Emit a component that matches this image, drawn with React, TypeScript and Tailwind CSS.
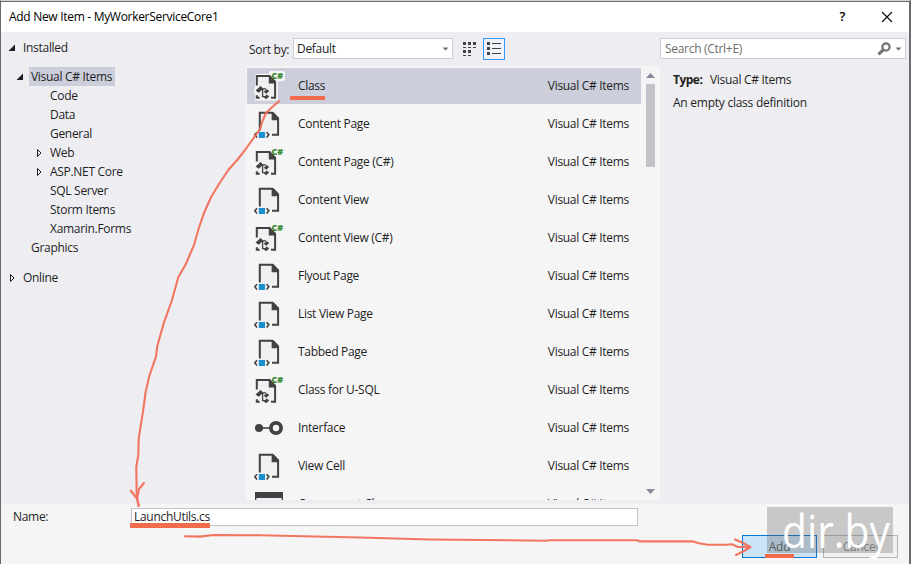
import clsx from 'clsx'

type IconKind = 'csharp' | 'xaml' | 'interface' | 'component'

const treeItems = [
  { label: 'Code' },
  { label: 'Data' },
  { label: 'General' },
  { label: 'Web', expandable: true },
  { label: 'ASP.NET Core', expandable: true },
  { label: 'SQL Server' },
  { label: 'Storm Items' },
  { label: 'Xamarin.Forms' },
]

const templates: { name: string; icon: IconKind }[] = [
  { name: 'Class', icon: 'csharp' },
  { name: 'Content Page', icon: 'xaml' },
  { name: 'Content Page (C#)', icon: 'csharp' },
  { name: 'Content View', icon: 'xaml' },
  { name: 'Content View (C#)', icon: 'csharp' },
  { name: 'Flyout Page', icon: 'xaml' },
  { name: 'List View Page', icon: 'xaml' },
  { name: 'Tabbed Page', icon: 'xaml' },
  { name: 'Class for U-SQL', icon: 'csharp' },
  { name: 'Interface', icon: 'interface' },
  { name: 'View Cell', icon: 'xaml' },
  { name: 'Component Class', icon: 'component' },
]

function OpenArrow() {
  return (
    <svg width="8" height="8" viewBox="0 0 8 8" className="shrink-0">
      <path d="M7 0.5V7H0.5Z" fill="#1e1e1e" />
    </svg>
  )
}

function ClosedArrow() {
  return (
    <svg width="6" height="10" viewBox="0 0 6 10" className="shrink-0">
      <path d="M1.5 1.5L5 5L1.5 8.5Z" fill="none" stroke="#1e1e1e" />
    </svg>
  )
}

function TemplateIcon({ kind, selected }: { kind: IconKind; selected?: boolean }) {
  if (kind === 'xaml') {
    return (
      <svg width="32" height="32" viewBox="0 0 32 32" className="shrink-0">
        <path d="M7 5H19L25 11V27H7Z" fill="#f0eff1" />
        <path d="M6.8 22.5V4.8H19.5L25.1 10.5V26.8H19" fill="none" stroke="#424242" strokeWidth="2" />
        <path d="M18.6 4.2H20.4L26 10.2V12.2H18.6Z" fill="#424242" />
        <path d="M4 24.2L1.8 26.8L4 29.4M13.6 24.2L15.8 26.8L13.6 29.4" fill="none" stroke="#424242" strokeWidth="1.6" />
        <path d="M5.8 24H12V30H5.8Z" fill="#1a90d0" />
      </svg>
    )
  }
  if (kind === 'interface') {
    return (
      <svg width="32" height="32" viewBox="0 0 32 32" className="shrink-0">
        <circle cx="6" cy="16" r="4" fill="#424242" />
        <path d="M9 16H17" stroke="#424242" strokeWidth="1.6" />
        <circle cx="23" cy="16" r="5.1" fill="#f5f5f5" stroke="#424242" strokeWidth="3.8" />
      </svg>
    )
  }
  if (kind === 'component') {
    return (
      <svg width="32" height="32" viewBox="0 0 32 32" className="shrink-0">
        <path d="M2 4H30V28H2Z" fill="#424242" />
        <path d="M3.3 10H28.7V27H3.3Z" fill="#f0eff1" />
      </svg>
    )
  }
  return (
    <svg width="32" height="32" viewBox="0 0 32 32" className="shrink-0 overflow-visible">
      {selected && (
        <path d="M3 5H17V2H31V9.5L24 11V29.5H3V24L1.5 20.5L3 18Z" fill="#f6f6f6" stroke="#f6f6f6" strokeWidth="2" strokeLinejoin="round" />
      )}
      <path d="M4 6H16L22 12V28H4Z" fill="#f0eff1" />
      <path d="M3.8 15.5V6.1H16.5L22.1 12V27.7H18" fill="none" stroke="#424242" strokeWidth="2" />
      <path d="M15.8 5.3H17.4L18.4 9.6L23 11V13.4H15.8Z" fill="#424242" />
      <path d="M3.8 25.2V27.7H6.6" fill="none" stroke="#424242" strokeWidth="2" />
      <path d="M2.6 20.4L7.6 16L10.4 18.8L5.6 22.8Z" fill="#424242" />
      <path d="M7 18.8H13M9.6 19V26.6H12" fill="none" stroke="#424242" strokeWidth="1.3" />
      <path d="M10.8 21.8L13.8 19L16.2 21L13.2 23.8ZM10.8 27.2L13.8 24.4L16.2 26.4L13.2 29.2Z" fill="#424242" />
      <text x="18.6" y="8.6" fontSize="9" fontWeight="800" letterSpacing="0" fontFamily="Open Sans, sans-serif" fill="#388a34" textLength="11.6" lengthAdjust="spacingAndGlyphs">C#</text>
    </svg>
  )
}

function Tree() {
  return (
    <aside className="w-[245px] shrink-0 pt-[6px]">
      <div className="flex h-[19px] items-center gap-[7px] pl-[7px]">
        <OpenArrow />
        <span>Installed</span>
      </div>
      <div className="mt-[10px] flex h-[19px] items-center gap-[5px] pl-[15px]">
        <OpenArrow />
        <span className="h-[19px] w-[86px] bg-[#cccedb] pl-[2px] leading-[19px]">Visual C# Items</span>
      </div>
      {treeItems.map((item) => (
        <div key={item.label} className="flex h-[19px] items-center pl-[35px]">
          <span className="flex w-[14px]">{item.expandable && <ClosedArrow />}</span>
          <span>{item.label}</span>
        </div>
      ))}
      <div className="flex h-[19px] items-center pl-[30px]">Graphics</div>
      <div className="mt-[11px] flex h-[19px] items-center gap-[8px] pl-[8px]">
        <ClosedArrow />
        <span>Online</span>
      </div>
    </aside>
  )
}

function SortBar() {
  return (
    <div className="flex h-[34px] items-start pt-[6px] pl-[3px]">
      <span className="w-[44px] leading-[23px]">Sort by:</span>
      <div className="flex h-[21px] w-[160px] items-center justify-between border border-[#cccedb] bg-white pr-[3px] pl-[3px]">
        <span>Default</span>
        <svg width="7" height="4" viewBox="0 0 7 4">
          <path d="M0.5 0.5H6.5L3.5 3.5Z" fill="#717171" />
        </svg>
      </div>
      <svg width="16" height="16" viewBox="0 0 16 16" className="mt-[3px] ml-[9px]">
        <path d="M1 1h3v3H1zM6 1h3v3H6zM11 1h3v3h-3zM1 9h3v3H1zM6 9h3v3H6z" fill="#424242" />
        <path d="M1 6.5h3M6 6.5h3M11 6.5h3M1 14.5h3M6 14.5h3" stroke="#424242" />
      </svg>
      <div className="ml-[5px] flex size-[22px] items-center justify-center border border-[#3399ff] bg-[#f0f2fa]">
        <svg width="16" height="16" viewBox="0 0 16 16">
          <path d="M1 1h3v3H1zM1 6h3v3H1zM1 11h3v3H1z" fill="#424242" />
          <path d="M6 2.5h9M6 7.5h9M6 12.5h9" stroke="#424242" />
        </svg>
      </div>
    </div>
  )
}

function TemplateList() {
  return (
    <div className="flex h-[434px] overflow-hidden bg-[#f5f5f5] pt-[2px]">
      <div className="w-[395px] shrink-0 pl-px">
        {templates.map((t, i) => (
          <div
            key={t.name}
            className={clsx('mb-[2px] flex h-9 items-center pr-[12px] pl-[6px]', i === 0 && 'bg-[#cccedb]')}
          >
            <TemplateIcon kind={t.icon} selected={i === 0} />
            <span className="ml-[13px] flex-1">{t.name}</span>
            <span>Visual C# Items</span>
          </div>
        ))}
      </div>
      <div className="flex w-[19px] flex-col items-center pt-[5px]">
        <svg width="9" height="5" viewBox="0 0 9 5">
          <path d="M0 5L4.5 0L9 5Z" fill="#868999" />
        </svg>
        <div className="mt-[6px] h-[83px] w-[9px] bg-[#c2c3c9]" />
        <svg width="9" height="5" viewBox="0 0 9 5" className="mt-[322px]">
          <path d="M0 0H9L4.5 5Z" fill="#868999" />
        </svg>
      </div>
    </div>
  )
}

function Details() {
  return (
    <aside className="flex-1 pt-[6px] pr-[3px]">
      <div className="flex h-[21px] items-center border border-[#cccedb] bg-white pr-[3px] pl-[4px]">
        <span className="flex-1 text-[#6d6d6d]">Search (Ctrl+E)</span>
        <svg width="14" height="14" viewBox="0 0 14 14">
          <circle cx="9" cy="5" r="3.6" fill="none" stroke="#717171" strokeWidth="2.2" />
          <path d="M6.4 7.6L1.5 12.4" stroke="#717171" strokeWidth="3" />
        </svg>
        <svg width="7" height="4" viewBox="0 0 7 4" className="ml-[4px]">
          <path d="M0.5 0.5H6.5L3.5 3.5Z" fill="#717171" />
        </svg>
      </div>
      <div className="mt-[13px] flex h-[16px] items-center pl-[13px]">
        <span className="w-[37px] font-bold tracking-[-0.5px]">Type:</span>
        <span>Visual C# Items</span>
      </div>
      <div className="mt-[7px] flex h-[16px] items-center pl-[13px] tracking-[-0.25px]">An empty class definition</div>
    </aside>
  )
}

function Annotations() {
  return (
    <svg width="911" height="564" viewBox="0 0 911 564" className="pointer-events-none absolute top-0 left-0">
      <g fill="none" stroke="#f26b55" strokeWidth="2.1" strokeLinecap="round" strokeLinejoin="round" opacity="0.92">
        <path d="M279.3 101L272 107.3L265.7 113.3L262.5 121L260 129.3L245 150L238 159L228.3 170L219 184L211 197.3L204 213L198.7 228.3L194 245L185.7 264.3L178.3 277.3L171.7 301L164 322.3L157.3 346L156 356.7L149.3 376L145.7 391.7L143 411.7L138.7 438.3L138.3 455L136.3 466.7L136.7 497L138.7 506" />
        <path d="M130.7 490.5L137.3 499L138.7 506M144 483L139 489L137 499" />
        <path d="M185 536.3L200 536.6L213 535L260 535.2L360 537.5L430 539.5L547 540.7L549 540.3L637 540.3L640 541.4L693 541.4L700 543.5L708 544.7L727 544.7L732 544.3L738 547L750 547" />
        <path d="M735 539.5L742 542.5L750.5 547L744 551L736 555" />
      </g>
      <path d="M290 96H325V100H290ZM130 523H210V528H130ZM765 554H794V558H765Z" fill="#f26b4b" />
    </svg>
  )
}

export default function App() {
  return (
    <div className="relative h-[564px] w-[911px] overflow-hidden border-t border-r-2 border-l border-[#d5d5d5] border-r-[#6a6a70] border-l-[#6a6a70] bg-[#f5f5f5] font-['Open_Sans',sans-serif] text-[12px] tracking-[-0.3px] whitespace-nowrap text-[#1e1e1e]">
      <header className="flex h-[31px] items-center border-t border-[#6a6a70] bg-white pl-[8px] text-black">
        <h1 className="flex-1">Add New Item - MyWorkerServiceCore1</h1>
        <span className="mr-[36px] text-[13px] font-semibold">?</span>
        <svg width="12" height="12" viewBox="0 0 12 12" className="mr-[16px]">
          <path d="M1 1L11 11M11 1L1 11" stroke="#111" strokeWidth="1.2" />
        </svg>
      </header>

      <main className="flex h-[472px] bg-[#eeeef2]">
        <Tree />
        <section className="w-[414px] shrink-0">
          <SortBar />
          <TemplateList />
        </section>
        <Details />
      </main>

      <footer>
        <div className="flex pt-[4px]">
          <label className="w-[130px] pl-[12px] leading-[18px]">Name:</label>
          <div className="h-[18px] w-[507px] border border-[#c3c3c8] bg-white pl-[2px] leading-[16px]">LaunchUtils.cs</div>
        </div>
        <div className="flex justify-end gap-[6px] pt-[9px] pr-[11px]">
          <button className="h-[23px] w-[75px] border border-[#0078d7] bg-[#cce4f7] text-[#555]">Add</button>
          <button className="h-[23px] w-[75px] border border-[#b5b5b5] bg-[#f0f0f0] text-[#8a8a8a]">Cancel</button>
        </div>
      </footer>

      {/* Watermark */}
      <div className="absolute top-[506px] left-[766px] h-[46px] w-[126px] bg-[#606060]/30">
        <span className="absolute top-[-9px] left-[15px] origin-left scale-x-[0.885] text-[46px] leading-[64px] font-medium tracking-normal text-white">dir.by</span>
      </div>
      <div className="absolute -top-px -left-px">
        <Annotations />
      </div>
    </div>
  )
}
